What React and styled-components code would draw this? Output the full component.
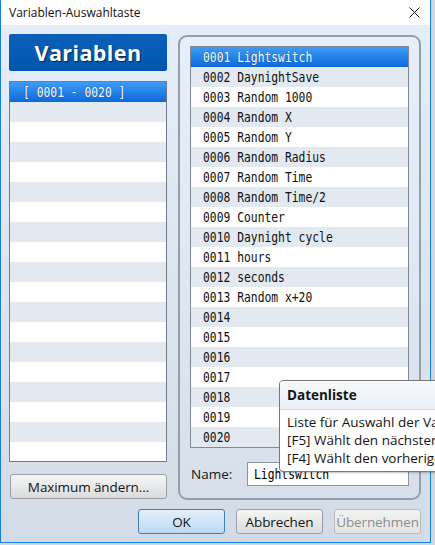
import React from "react";
import styled, { createGlobalStyle } from "styled-components";

const GlobalStyle = createGlobalStyle`
  html, body {
    margin: 0;
    padding: 0;
    background: #cfd5db;
    font-family: "Open Sans", "Noto Sans", sans-serif;
    overflow: hidden;
  }
`;

const Page = styled.div`
  position: relative;
  width: 435px;
  height: 545px;
  overflow: hidden;
`;

const Window = styled.div`
  width: 431px;
  height: 543px;
  box-sizing: border-box;
  border: 1px solid #1a7fd6;
  border-top: none;
  display: flex;
  flex-direction: column;
  background: linear-gradient(#e5eefa, #d3dce6);
`;

const TitleBar = styled.div`
  height: 25px;
  flex: none;
  background: #fff;
  display: flex;
  align-items: center;
  justify-content: space-between;
  padding: 0 10px 0 8px;
  font-size: 12px;
  color: #111;
`;

const Close = styled.svg`
  width: 11px;
  height: 11px;
`;

const Body = styled.div`
  flex: 1;
  display: flex;
  flex-direction: column;
  padding: 9px 9px 0 8px;
`;

const Main = styled.div`
  display: flex;
  gap: 11px;
`;

const LeftCol = styled.div`
  width: 159px;
  display: flex;
  flex-direction: column;
`;

const Header = styled.div`
  height: 37px;
  background: linear-gradient(#0b5fb8, #0056ad);
  border-radius: 2px;
  color: #fff;
  font-weight: 700;
  font-size: 21.5px;
  letter-spacing: 0.4px;
  display: flex;
  align-items: center;
  justify-content: center;
  text-shadow: 1px 1px 1px #032a5a;
`;

const List = styled.div`
  border: 1px solid ${(p) => (p.$dark ? "#6f7c8a" : "#7d8996")};
  background: #fff;
  height: ${(p) => p.$height}px;
  box-sizing: border-box;
  overflow: hidden;
  margin-top: ${(p) => p.$top || 0}px;
`;

const Row = styled.div`
  height: 20px;
  display: flex;
  align-items: center;
  padding-left: ${(p) => p.$pad}px;
  color: ${(p) => (p.$sel ? "#fff" : "#101010")};
  background: ${(p) =>
    p.$sel
      ? "linear-gradient(#3f9cf8, #0c69da)"
      : p.$alt
      ? "#e3e9f0"
      : "#fff"};
  text-shadow: ${(p) => (p.$sel ? "0 0 1px #0a3f80" : "none")};
`;

const Mono = styled.span`
  display: inline-block;
  font-family: "DejaVu Sans Mono", monospace;
  font-size: 14px;
  white-space: pre;
  transform: scaleX(0.81);
  transform-origin: left center;
`;

const Button = styled.button`
  height: 25px;
  width: ${(p) => p.$w}px;
  box-sizing: border-box;
  border-radius: 3px;
  font-family: "Open Sans", "Noto Sans", sans-serif;
  font-size: 13.5px;
  letter-spacing: -0.1px;
  padding: 0;
  white-space: nowrap;
  color: ${(p) => (p.$disabled ? "#8d8d8d" : "#141414")};
  border: 1px solid
    ${(p) => (p.$primary ? "#3d7fb4" : p.$disabled ? "#b9bcbf" : "#9aa0a6")};
  background: ${(p) =>
    p.$primary
      ? "linear-gradient(#e4f0fc, #bcd9f2)"
      : p.$disabled
      ? "linear-gradient(#f2f2f2, #e4e4e4)"
      : "linear-gradient(#f6f6f6, #d9dbdd)"};
`;

const MaxButton = styled(Button)`
  margin-top: 12px;
  margin-left: 1px;
`;

const Group = styled.div`
  width: 243px;
  height: 465px;
  margin-top: 1px;
  box-sizing: border-box;
  border: 2px solid #959fa9;
  border-radius: 9px;
  padding: 9px 10px 0 10px;
  display: flex;
  flex-direction: column;
  background: linear-gradient(#e7effa, #d7e0ea);
`;

const NameRow = styled.div`
  display: flex;
  align-items: center;
  margin-top: 14px;
  padding-left: 1px;
`;

const Label = styled.span`
  width: 56px;
  font-size: 13.5px;
  color: #141414;
`;

const Input = styled.div`
  width: 162px;
  height: 24px;
  box-sizing: border-box;
  border: 1px solid #8a95a0;
  background: #fff;
  display: flex;
  align-items: center;
  padding-left: 6px;
  overflow: hidden;
`;

const Buttons = styled.div`
  display: flex;
  justify-content: flex-end;
  gap: 11px;
  margin-top: 9px;
`;

const Tooltip = styled.div`
  position: absolute;
  left: 279px;
  top: 380px;
  width: 180px;
  height: 92px;
  box-sizing: border-box;
  border: 1px solid #7a7a7a;
  border-radius: 4px 0 0 4px;
  background: #fff;
  box-shadow: 1px 1px 2px rgba(0, 0, 0, 0.25);
  overflow: hidden;
  white-space: nowrap;
`;

const TipHead = styled.div`
  height: 28px;
  background: linear-gradient(#f7f9fc, #eaf0f7);
  border-bottom: 1px solid #cfd6de;
  display: flex;
  align-items: center;
  padding-left: 7px;
  font-weight: 700;
  font-size: 13.5px;
  color: #141414;
`;

const TipBody = styled.div`
  padding: 3px 0 0 7px;
  font-size: 13.5px;
  line-height: 18px;
  color: #141414;
`;

const names = [
  "Lightswitch",
  "DaynightSave",
  "Random 1000",
  "Random X",
  "Random Y",
  "Random Radius",
  "Random Time",
  "Random Time/2",
  "Counter",
  "Daynight cycle",
  "hours",
  "seconds",
  "Random x+20",
];

const vars = Array.from({ length: 20 }, (_, i) => ({
  id: String(i + 1).padStart(4, "0"),
  name: names[i] || "",
}));

export default function App() {
  return (
    <Page>
      <GlobalStyle />
      <Window>
        <TitleBar>
          <span>Variablen-Auswahltaste</span>
          <Close viewBox="0 0 11 11">
            <path d="M0.5 0.5 L10.5 10.5 M10.5 0.5 L0.5 10.5" stroke="#111" strokeWidth="1" />
          </Close>
        </TitleBar>
        <Body>
          <Main>
            <LeftCol>
              <Header>Variablen</Header>
              <List $height={381} $top={10} $dark>
                {Array.from({ length: 19 }, (_, i) => (
                  <Row key={i} $sel={i === 0} $alt={i % 2 === 1} $pad={13}>
                    {i === 0 && <Mono>[ 0001 - 0020 ]</Mono>}
                  </Row>
                ))}
              </List>
              <MaxButton $w={157}>Maximum ändern...</MaxButton>
            </LeftCol>
            <Group>
              <List $height={402}>
                {vars.map((v, i) => (
                  <Row key={v.id} $sel={i === 0} $alt={i % 2 === 1} $pad={12}>
                    <Mono>
                      {v.id} {v.name}
                    </Mono>
                  </Row>
                ))}
              </List>
              <NameRow>
                <Label>Name:</Label>
                <Input>
                  <Mono>Lightswitch</Mono>
                </Input>
              </NameRow>
            </Group>
          </Main>
          <Buttons>
            <Button $w={87} $primary>OK</Button>
            <Button $w={87}>Abbrechen</Button>
            <Button $w={87} $disabled>Übernehmen</Button>
          </Buttons>
        </Body>
      </Window>
      <Tooltip>
        <TipHead>Datenliste</TipHead>
        <TipBody>
          <div>Liste für Auswahl der Variablen</div>
          <div>[F5] Wählt den nächsten Bereich</div>
          <div>[F4] Wählt den vorherigen Bereich</div>
        </TipBody>
      </Tooltip>
    </Page>
  );
}
